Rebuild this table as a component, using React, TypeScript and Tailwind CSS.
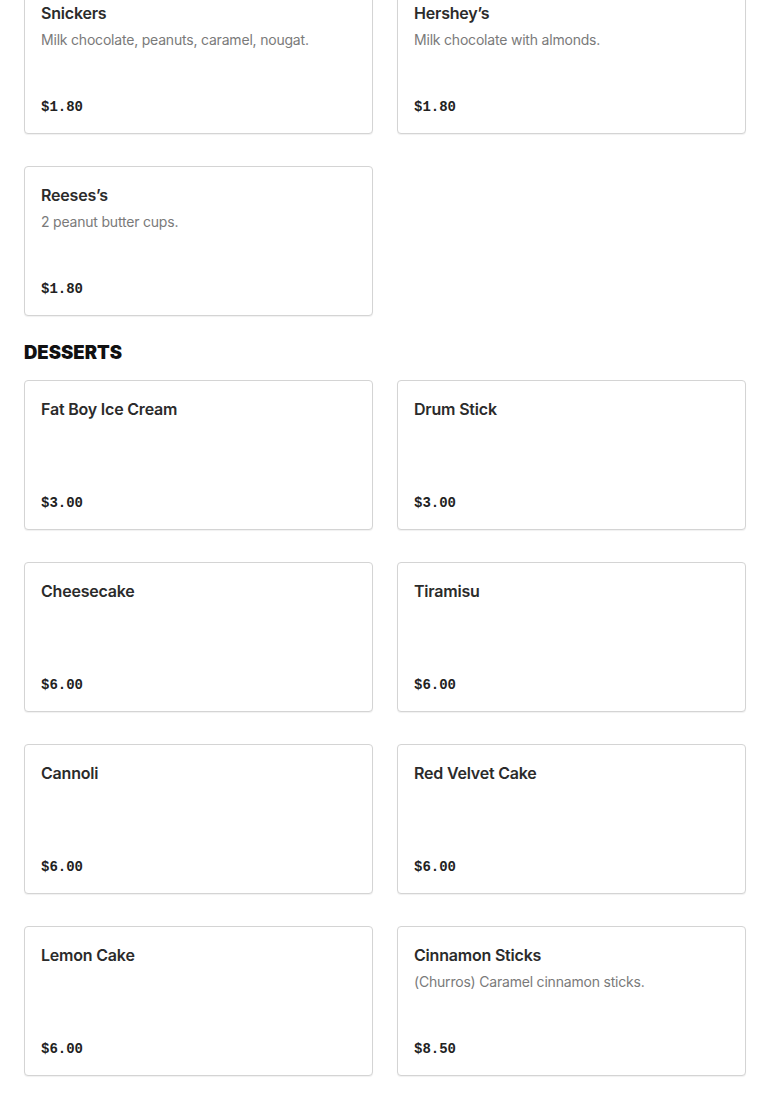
import React from "react";

type Item = { name: string; desc?: string; price: string };

const top: Item[] = [
  { name: "Snickers", desc: "Milk chocolate, peanuts, caramel, nougat.", price: "$1.80" },
  { name: "Hershey\u2019s", desc: "Milk chocolate with almonds.", price: "$1.80" },
  { name: "Reeses\u2019s", desc: "2 peanut butter cups.", price: "$1.80" },
];

const desserts: Item[] = [
  { name: "Fat Boy Ice Cream", price: "$3.00" },
  { name: "Drum Stick", price: "$3.00" },
  { name: "Cheesecake", price: "$6.00" },
  { name: "Tiramisu", price: "$6.00" },
  { name: "Cannoli", price: "$6.00" },
  { name: "Red Velvet Cake", price: "$6.00" },
  { name: "Lemon Cake", price: "$6.00" },
  { name: "Cinnamon Sticks", desc: "(Churros) Caramel cinnamon sticks.", price: "$8.50" },
];

function Card({ item }: { item: Item }) {
  return (
    <div className="flex h-[150px] flex-col rounded border border-[#d4d4d4] bg-white p-4 shadow-[0_1px_1px_rgba(0,0,0,0.06)]">
      <div className="text-[16px] font-semibold leading-6 text-[#2b2b2b] tracking-[-0.2px]">{item.name}</div>
      {item.desc && (
        <div className="mt-[5px] text-[14px] leading-5 tracking-[-0.2px] text-[#7a7a7a]">{item.desc}</div>
      )}
      <div className="mt-auto font-['Liberation_Mono',monospace] text-[14px] font-bold leading-5 text-[#222]">
        {item.price}
      </div>
    </div>
  );
}

export default function App() {
  return (
    <div className="min-h-screen bg-white font-['Inter',sans-serif] overflow-hidden">
      <div className="-mt-4 px-6 pb-6">
        <div className="grid grid-cols-2 gap-x-6 gap-y-8">
          {top.map((it) => (
            <Card key={it.name} item={it} />
          ))}
        </div>
        <h2 className="mt-6 mb-4 text-[18.5px] font-black leading-6 text-[#111]">DESSERTS</h2>
        <div className="grid grid-cols-2 gap-x-6 gap-y-8">
          {desserts.map((it) => (
            <Card key={it.name} item={it} />
          ))}
        </div>
      </div>
    </div>
  );
}
